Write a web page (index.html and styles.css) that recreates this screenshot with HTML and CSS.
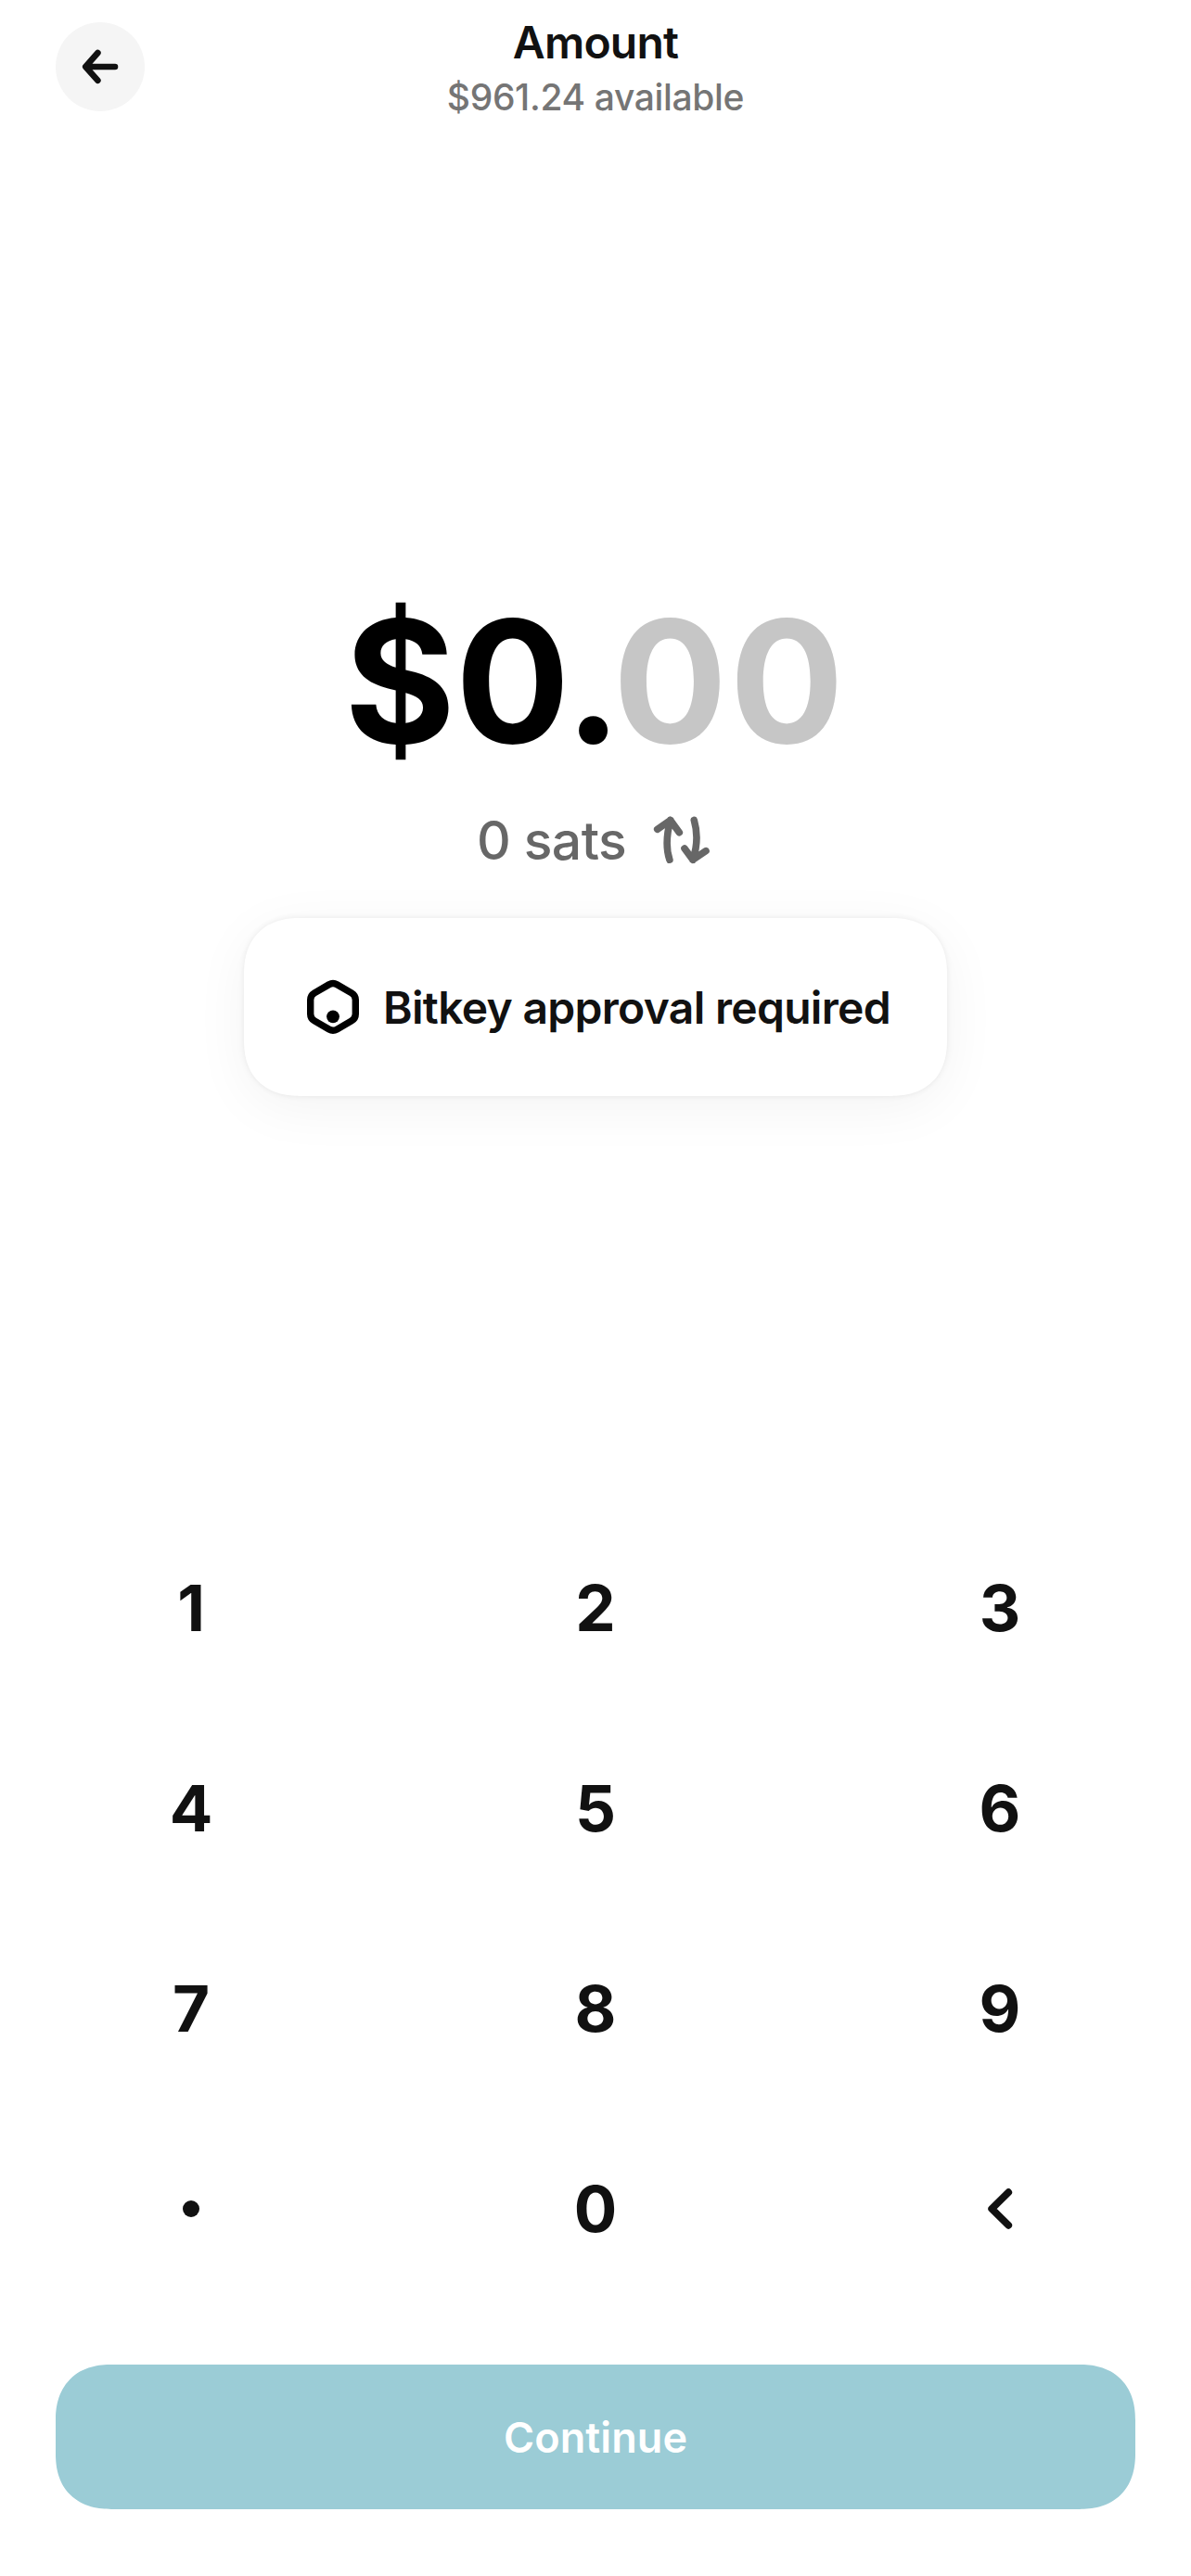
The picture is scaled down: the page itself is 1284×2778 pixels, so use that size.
FILE: index.html
```
<!DOCTYPE html>
<html lang="en">
<head>
<meta charset="utf-8">
<title>Amount</title>
<link rel="stylesheet" href="styles.css">
</head>
<body>
<main class="screen">
  <header class="topbar">
    <button class="back" aria-label="Back">
      <svg width="96" height="96" viewBox="0 0 96 96"><path d="M45.4 33 32.2 48l13.2 14.7M33 48h31"/></svg>
    </button>
    <div class="heading">
      <h1 class="title">Amount</h1>
      <p class="available">$961.24 available</p>
    </div>
  </header>

  <section class="entry">
    <p class="amount">$0.<span class="pending">00</span></p>
    <button class="convert">
      <span>0 sats</span>
      <svg class="swap" width="72" height="72" viewBox="0 0 72 72"><path d="M22.900 57.200Q17 40 23.700 14.500M9.700 24.300 23.700 14.500 33.300 27.700M49.300 14.500Q55.300 35 48 57.200M39 45 48 57.200 62 47.700"/></svg>
    </button>
    <div class="approval">
      <svg class="device" width="72" height="72" viewBox="0 0 72 72"><path d="M31.700 11.700q4.300-2.400 8.600 0l15.700 9.200q4.300 2.500 4.300 7.400v15.200q0 4.900-4.300 7.400l-15.700 9.200q-4.300 2.400-8.600 0l-15.700-9.200q-4.300-2.500-4.300-7.400V28.300q0-4.900 4.300-7.400z"/><circle cx="36" cy="46.300" r="6.900"/></svg>
      <span>Bitkey approval required</span>
    </div>
  </section>

  <section class="keypad">
    <button>1</button><button>2</button><button>3</button>
    <button>4</button><button>5</button><button>6</button>
    <button>7</button><button>8</button><button>9</button>
    <button aria-label="Decimal point"><span class="point"></span></button>
    <button>0</button>
    <button aria-label="Delete"><svg width="72" height="72" viewBox="0 0 72 72"><path d="M45.200 18.200 27.200 36l18 17.800"/></svg></button>
  </section>

  <button class="continue">Continue</button>
</main>
</body>
</html>
```
FILE: styles.css
```
* { box-sizing: border-box; margin: 0; padding: 0; }

body { background: #fff; }

button {
  border: 0;
  background: none;
  color: inherit;
  font: inherit;
}

svg { display: block; flex: none; fill: none; stroke-linecap: round; stroke-linejoin: round; }

.screen {
  display: flex;
  flex-direction: column;
  width: 1284px;
  height: 2778px;
  padding: 12px 60px 72px;
  background: #fff;
  color: #111;
  font-family: Inter, "Liberation Sans", sans-serif;
}

.topbar {
  display: grid;
  grid-template-columns: 96px 1fr 96px;
  align-items: start;
  height: 120px;
}

.back {
  width: 96px;
  height: 96px;
  margin-top: 12px;
  border-radius: 50%;
  background: #f5f5f5;
}

.back svg { stroke: #111; stroke-width: 6.6; }

.heading { text-align: center; }

.title {
  font-size: 48px;
  font-weight: 600;
  line-height: 68px;
  letter-spacing: -0.8px;
}

.available {
  color: #757575;
  font-size: 39px;
  font-weight: 500;
  line-height: 50px;
  letter-spacing: -0.35px;
}

.entry {
  display: flex;
  flex-direction: column;
  align-items: center;
  padding-top: 492px;
}

.amount {
  margin-left: -3px;
  color: #000;
  font-size: 183px;
  font-weight: 700;
  line-height: 222px;
}

.pending {
  margin: 0 -2.4px 0 -9.5px;
  color: #c6c6c6;
  letter-spacing: 2.4px;
}

.convert {
  display: flex;
  align-items: center;
  gap: 24px;
  height: 84px;
  margin-top: 18px;
  padding-left: 1px;
  color: #676767;
  font-size: 57px;
  font-weight: 500;
  letter-spacing: -0.6px;
}

.swap { stroke: #676767; stroke-width: 7.6; }

.approval {
  display: flex;
  align-items: center;
  gap: 18px;
  width: 758px;
  height: 192px;
  margin-top: 42px;
  padding: 0 60px;
  border-radius: 60px;
  corner-shape: superellipse(1.2);
  background: #fff;
  box-shadow: 0 12px 60px rgb(0 0 0 / 5%), 0 0 6px rgb(0 0 0 / 8%);
  font-size: 48px;
  font-weight: 600;
  letter-spacing: -0.7px;
  white-space: nowrap;
}

.device path { stroke: #000; stroke-width: 7.4; }
.device circle { fill: #000; }

.keypad {
  display: grid;
  grid-template-columns: repeat(3, 292px);
  grid-auto-rows: 216px;
  justify-content: space-between;
  margin-top: auto;
  margin-bottom: 60px;
  font-size: 69px;
  font-weight: 700;
}

.keypad button {
  display: flex;
  align-items: center;
  justify-content: center;
}

.keypad svg { stroke: #111; stroke-width: 7.8; }

.point {
  width: 18px;
  height: 18px;
  border-radius: 50%;
  background: #111;
}

.continue {
  height: 156px;
  border-radius: 60px;
  corner-shape: superellipse(1.2);
  background: #9bccd6;
  color: #fff;
  font-size: 45px;
  font-weight: 600;
  letter-spacing: 0.1px;
}
```
